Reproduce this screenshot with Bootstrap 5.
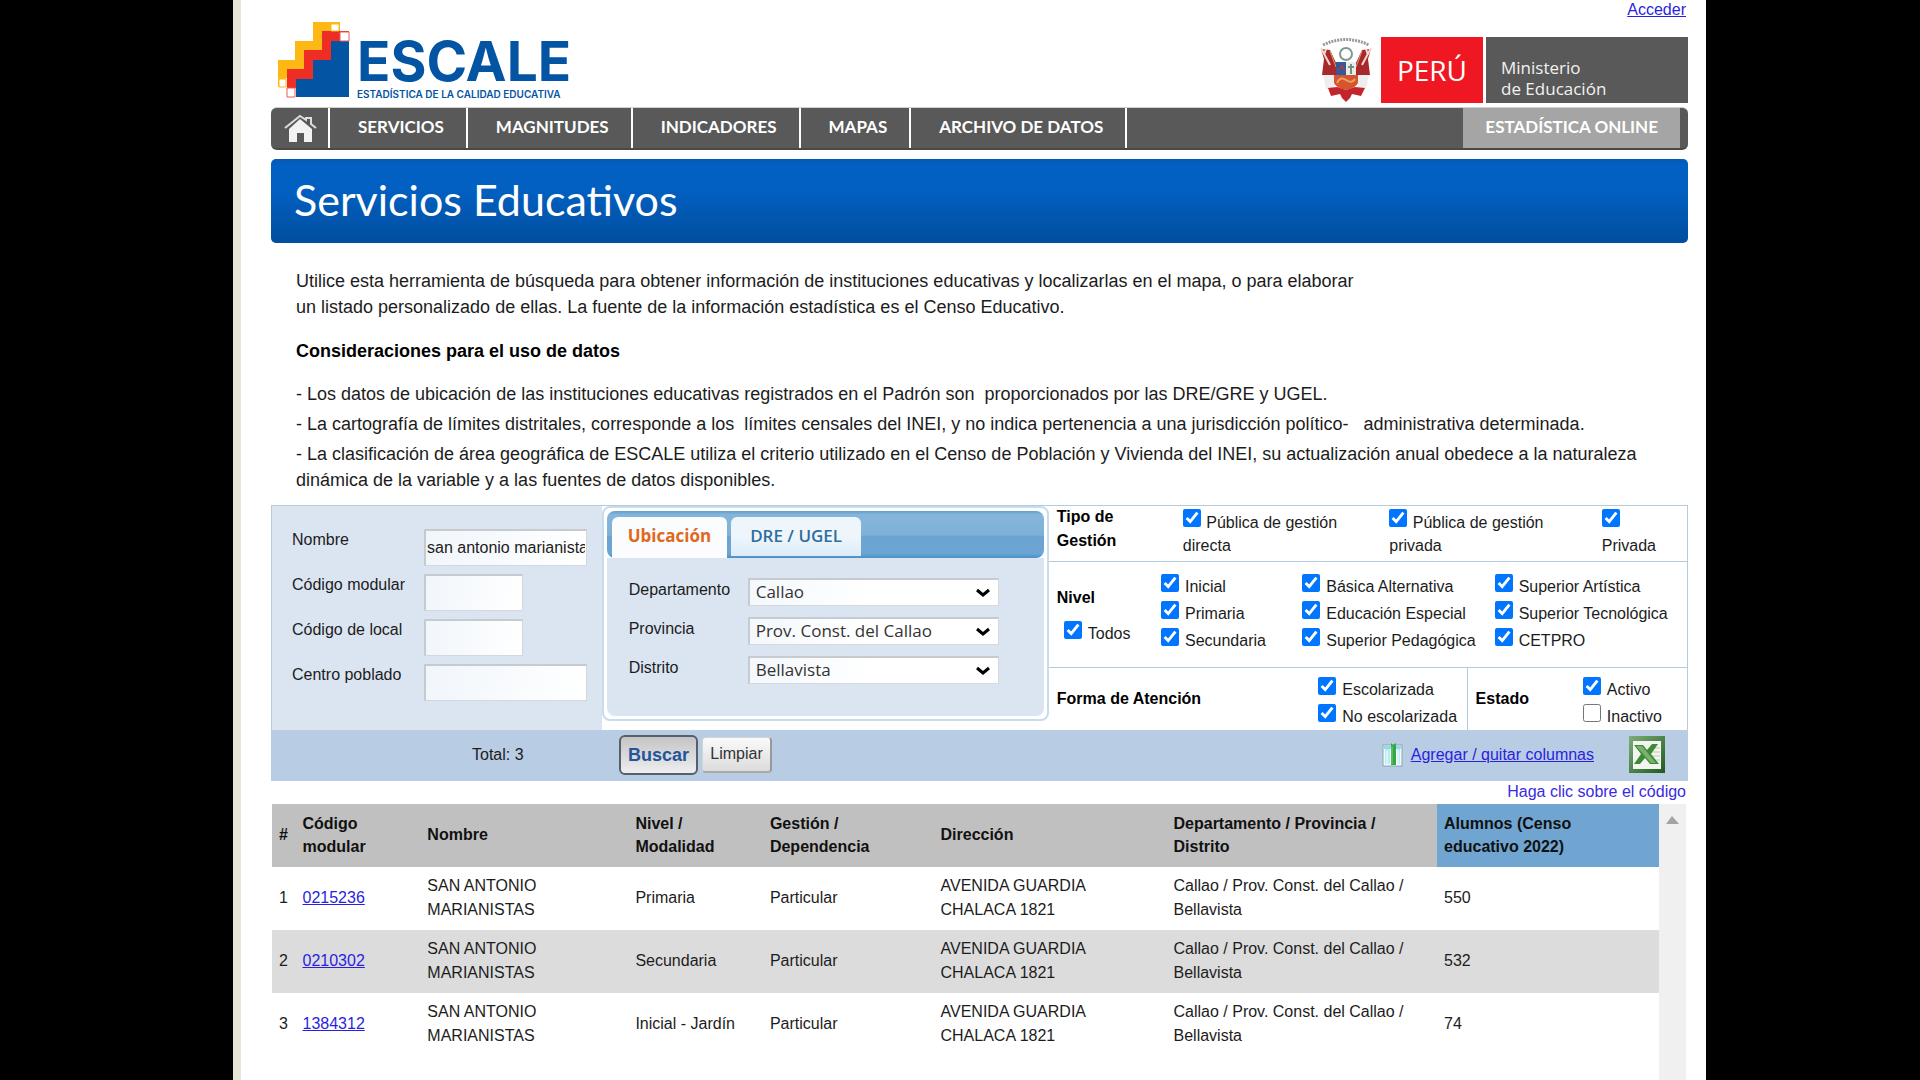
<!DOCTYPE html>
<html lang="es">
<head>
<meta charset="utf-8">
<meta name="viewport" content="width=device-width, initial-scale=1">
<title>ESCALE - Servicios Educativos</title>
<link href="https://cdn.jsdelivr.net/npm/bootstrap@5.3.0/dist/css/bootstrap.min.css" rel="stylesheet">
<style>
  body { background: #000; color: #1c1c1c; font-family: "Liberation Sans", Arial, sans-serif; font-size: 16px; line-height: 24px; }
  a { color: #2a1fe0; }
  .page-shell { margin: 0 214px 0 233px; border-left: 8px solid #e6e4d4; min-height: 100vh; background: #fff; padding: 0 18px 0 30px; overflow: hidden; }
  .login-line { height: 21px; line-height: 20px; padding-right: 2px; }
  .top-brand { height: 86px; }
  .brand-mark { margin-left: 6px; }
  .brand-text { padding: 12px 0 0 7px; }
  .brand-name { font-family: Inter, sans-serif; font-weight: 700; font-size: 55px; line-height: 56px; color: #0454a4; }
  .brand-sub { font-family: Inter, sans-serif; font-weight: 600; font-size: 10px; line-height: 10px; color: #0454a4; white-space: nowrap; }
  .gov { height: 66px; color: #fff; font-family: "Open Sans", sans-serif; }
  .gov-peru { background: #ef1822; width: 102px; font-size: 28px; }
  .gov-min { background: #595959; width: 202px; margin-left: 3px; padding: 20px 0 0 15px; font-size: 17px; line-height: 21px; color: #f2f2f2; }
  .main-nav { background: #595959; height: 43px; border-radius: 6px; border-top: 1px solid #d0d0d0; border-bottom: 2px solid #4a4a48; padding-right: 8px; font-family: Lato, sans-serif; font-weight: 700; font-size: 17px; }
  .main-nav a { color: #fff; text-decoration: none; display: flex; align-items: center; padding: 0 22px 2px 28px; border-right: 2px solid #fff; }
  .main-nav a.nav-home { padding: 0 11px 0 13px; }
  .main-nav a.nav-online { background: #a5a5a5; border: 0; padding: 0 22px 2px 22px; }
  .title-bar { margin-top: 9px; height: 84px; border-radius: 5px; background: linear-gradient(#0459b4, #0260c4 8%, #0260c2 35%, #014e9e); color: #fff; font-family: Lato, sans-serif; padding-left: 23px; }
  .title-bar h1 { font-size: 43px; font-weight: 400; line-height: 82px; margin: 0; }
  .intro { padding: 25px 20px 0 25px; font-size: 18px; line-height: 26px; }
  .intro p { margin: 0; }
  .intro h2 { font-size: 18px; font-weight: 700; line-height: 26px; margin: 18px 0 17px; color: #000; }
  .intro li { margin-bottom: 4px; }
  .intro li:last-child { margin-bottom: 0; }
  .search-form { border: 1px solid #b4cadf; border-bottom: 0; margin-top: 12px; }
  .zone-left { width: 23.3%; background: #dbe5f1; padding: 23px 0 0 20px; }
  .zone-mid { width: 31.6%; }
  .zone-right { width: 45.1%; }
  .txt-field { border: 1px solid #d2d8dd; border-top: 2px solid #c6cbd0; border-left: 2px solid #c6cbd0; background: linear-gradient(100deg, #f1f6fb, #fff); height: 37px; padding: 0 1px; color: #1c1c1c; border-radius: 0; }
  .txt-short { width: 99px; }
  .txt-wide { width: 163px; }
  .fld { display: flex; align-items: flex-start; margin-bottom: 8px; }
  .fld label { width: 132px; flex: none; line-height: 22px; }
  .tab-frame { border: 2px solid #c7dcec; border-radius: 8px; padding: 3px; background: #fff; height: 215px; }
  .tab-head { background: linear-gradient(#5f9fd0, #86b5da 8%, #7fb1d8 50%, #6aa4d2 55%, #6ca5d3 90%, #4a90c8); border-radius: 8px; height: 47px; padding: 6px 0 0 5px; gap: 4px; }
  .tab-head button { border: 0; border-radius: 6px 6px 0 0; font-family: "Open Sans", sans-serif; font-weight: 600; font-size: 17px; line-height: 20px; height: 39px; padding: 0 19px 2px; color: #2e6e9e; background: linear-gradient(#eef6fc 50%, #dcecf8); }
  .tab-head button.tab-on { background: #fafcfe; color: #e0681c; height: 41px; padding: 0 16px 4px; font-weight: 700; }
  .tab-body { background: #dbe5f1; border-radius: 0 0 8px 8px; height: 158px; padding: 20px 0 0 22px; }
  .sel-row { display: flex; align-items: flex-start; height: 39px; }
  .sel-row label { width: 119px; flex: none; line-height: 24px; }
  .sel-row select { width: 251px; height: 28px; appearance: none; border: 1px solid #d6d9dc; border-top: 2px solid #c6cbd0; border-left: 2px solid #c6cbd0; border-radius: 0; background: url("data:image/svg+xml,%3Csvg xmlns='http://www.w3.org/2000/svg' width='14' height='10'%3E%3Cpath d='M1 2L7 7L13 2' fill='none' stroke='%23000' stroke-width='3'/%3E%3C/svg%3E") no-repeat right 8px center, linear-gradient(100deg, #f4f8fc, #fff 50%); font-family: "Open Sans", sans-serif; font-size: 17px; line-height: 22px; color: #333; padding: 0 6px 2px; }
  .crit { border-bottom: 1px solid #b4cadf; padding-left: 8px; }
  .crit strong { color: #000; }
  input[type=checkbox] { width: 18px; height: 18px; margin: 0; accent-color: #0075ff; flex: none; }
  .crit-tipo { height: 56px; }
  .crit-tipo strong { width: 126px; flex: none; margin-top: -1px; }
  .opt-wrap { line-height: 23px; padding-top: 3px; white-space: nowrap; }
  .opt-wrap input { vertical-align: 1px; margin-right: 1px; }
  .tipo-a { flex: 206 1 0; }
  .tipo-b { flex: 212 1 0; }
  .tipo-c { flex: 85 1 0; }
  .crit-nivel { height: 106px; padding-top: 12px; }
  .niv-head { flex: 104 1 0; padding-top: 12px; }
  .niv-todos { margin: 11px 0 0 7px; }
  .niv-a { flex: 141 1 0; }
  .niv-b { flex: 192 1 0; }
  .niv-c { flex: 192 1 0; }
  .opt { display: flex; gap: 6px; height: 27px; align-items: flex-start; white-space: nowrap; }
  .opt label { line-height: 25px; }
  .crit-forma { height: 62px; border-bottom: 0; }
  .forma-name { flex: 261 1 0; }
  .forma-opts { flex: 148 1 0; padding-top: 9px; }
  .estado-name { flex: 107 1 0; border-left: 1px solid #b4cadf; padding-left: 8px; align-self: stretch; display: flex; align-items: center; }
  .estado-opts { flex: 104 1 0; padding-top: 9px; }
  .bottom-bar { background: #b8cce4; height: 51px; margin: 0 -1px; padding: 0 23px 2px 201px; }
  .total-box { width: 147px; }
  .btn-main { width: 79px; height: 40px; border: 2px solid #55606c; border-radius: 6px; background: linear-gradient(#c4c4c4, #eee); font-weight: 700; font-size: 18px; color: #24549a; padding: 0; margin-right: 4px; }
  .btn-alt { width: 70px; height: 36px; border: 1px solid #d4d4d4; border-right: 2px solid #999; border-bottom: 2px solid #aaa; border-radius: 4px; background: linear-gradient(#fafafa, #dcdcdc); color: #333; padding: 0; }
  .cols-link { margin: 0 35px 0 8px; }
  .hint { color: #3a2be0; text-align: right; line-height: 22px; padding: 0 2px 1px 0; }
  .results { margin-right: 2px; margin-left: 1px; }
  .res-table { width: 100%; table-layout: fixed; border-collapse: collapse; }
  .res-table th, .res-table td { padding: 0; vertical-align: middle; }
  .res-table th { background: #c0c0c0; height: 63px; line-height: 23px; color: #111; padding-bottom: 2px; }
  .res-table td { height: 63px; padding-bottom: 2px; }
  .res-table tbody tr:nth-child(2) { background: #dcdcdc; }
  .res-table th:last-child { background: #6fa5d0; }
  .res-table th:last-child, .res-table td:last-child { padding-left: 7px; }
  .res-table th:first-child, .res-table td:first-child { padding-left: 7px; }
  .c-num { width: 2.2%; } .c-cod { width: 9%; } .c-nom { width: 15%; } .c-niv { width: 9.7%; } .c-ges { width: 12.3%; } .c-dir { width: 16.8%; } .c-dep { width: 19%; }
  .scroll-track { width: 27px; flex: none; background: #f0f0f0; height: 276px; padding-top: 12px; text-align: center; line-height: 0; }
</style>
</head>
<body>
<div class="page-shell">
  <div class="login-line text-end"><a href="#">Acceder</a></div>
  <header class="top-brand d-flex justify-content-between">
    <div class="d-flex brand-mark">
      <svg width="73" height="78" viewBox="0 0 73 78" aria-hidden="true">
        <path d="M36 1H63V10H54V19H45V29H36V38H27V48H18V57H9V66H1V39H18V20H36Z" fill="#fdb813"/>
        <path d="M45 10H72V20H63V29H54V39H45V48H36V58H27V67H18V76H10V48H27V29H45Z" fill="#ee2d24"/>
        <path d="M54 20H72V76H19V58H36V39H54Z" fill="#0454a4"/>
        <path d="M54 3H62V10H54ZM2 58H9V66H2Z" fill="#fff" stroke="#fdb813"/>
        <path d="M63 11H72V20H63ZM10 67H18V76H10Z" fill="#fff" stroke="#ee5a50"/>
      </svg>
      <div class="brand-text">
        <div class="brand-name">ESCALE</div>
        <div class="brand-sub">ESTADÍSTICA DE LA CALIDAD EDUCATIVA</div>
      </div>
    </div>
    <div class="d-flex gov mt-3">
      <svg width="59" height="66" viewBox="0 0 59 66" class="me-1" aria-hidden="true">
        <path d="M5 8Q28 -3 51 8" fill="none" stroke="#999" stroke-width="3" stroke-dasharray="2 1"/>
        <path d="M3 12L12 13L19 28V38H4L6 22ZM53 12L44 13L37 28V38H52L50 22Z" fill="#a8282c"/>
        <path d="M3 11L12 28M53 11L44 28M8 12L6 18M48 12L50 18" stroke="#f3d9ce" stroke-width="2"/>
        <path d="M12 14L18 30M44 14L38 30" stroke="#d9a066" stroke-width="1"/>
        <path d="M5 38H16V52H8ZM51 38H40V52H48Z" fill="#eee"/>
        <circle cx="28" cy="17" r="6" fill="#fff" stroke="#7d9a90" stroke-width="2"/>
        <path d="M18 25H28V38H18Z" fill="#2d5c9e"/><path d="M28 25H38V38H28Z" fill="#e8ecec"/>
        <path d="M20 33L24 29L27 34" stroke="#a33c44" stroke-width="2" fill="none"/>
        <path d="M33 27V37M30 30H36" stroke="#77907c" stroke-width="2"/>
        <path d="M16 38H40V46Q38 51 28 53Q18 51 16 46Z" fill="#d4552f"/>
        <path d="M19 46Q22 39 28 43T37 42" stroke="#f0a060" stroke-width="2" fill="none"/>
        <path d="M10 51L19 50L28 53L37 50L47 51L43 59L34 57L32 61L28 65L24 61L22 57L13 59Z" fill="#c3252c"/>
      </svg>
      <div class="gov-peru d-flex align-items-center justify-content-center">PERÚ</div>
      <div class="gov-min">Ministerio<br>de Educación</div>
    </div>
  </header>
  <nav class="main-nav d-flex">
    <a class="nav-home" href="#" aria-label="Inicio"><svg width="33" height="29" viewBox="0 0 33 29"><path d="M1 14L16 2L22 6V4H27V10L32 14" fill="none" stroke="#ddd" stroke-width="2"/><path d="M16 5L28 15V28H20V19H13V28H5V15Z" fill="#f2f2f2"/></svg></a>
    <a href="#">SERVICIOS</a>
    <a href="#">MAGNITUDES</a>
    <a href="#">INDICADORES</a>
    <a href="#">MAPAS</a>
    <a href="#">ARCHIVO DE DATOS</a>
    <a class="nav-online ms-auto" href="#">ESTADÍSTICA ONLINE</a>
  </nav>
  <div class="title-bar"><h1>Servicios Educativos</h1></div>
  <section class="intro">
    <p>Utilice esta herramienta de búsqueda para obtener información de instituciones educativas y localizarlas en el mapa, o para elaborar<br>un listado personalizado de ellas. La fuente de la información estadística es el Censo Educativo.</p>
    <h2>Consideraciones para el uso de datos</h2>
    <ul class="list-unstyled m-0">
      <li>- Los datos de ubicación de las instituciones educativas registrados en el Padrón son &nbsp;proporcionados por las DRE/GRE y UGEL.</li>
      <li>- La cartografía de límites distritales, corresponde a los &nbsp;límites censales del INEI, y no indica pertenencia a una jurisdicción político- &nbsp; administrativa determinada.</li>
      <li>- La clasificación de área geográfica de ESCALE utiliza el criterio utilizado en el Censo de Población y Vivienda del INEI, su actualización anual obedece a la naturaleza dinámica de la variable y a las fuentes de datos disponibles.</li>
    </ul>
  </section>
  <form class="search-form">
    <div class="d-flex">
      <div class="zone-left">
        <div class="fld"><label for="nom">Nombre</label><input id="nom" class="txt-field txt-wide" type="text" value="san antonio marianistas"></div>
        <div class="fld"><label for="cm">Código modular</label><input id="cm" class="txt-field txt-short" type="text"></div>
        <div class="fld"><label for="cl">Código de local</label><input id="cl" class="txt-field txt-short" type="text"></div>
        <div class="fld"><label for="cp">Centro poblado</label><input id="cp" class="txt-field txt-wide" type="text"></div>
      </div>
      <div class="zone-mid">
        <div class="tab-frame">
          <div class="tab-head d-flex"><button type="button" class="tab-on">Ubicación</button><button type="button">DRE / UGEL</button></div>
          <div class="tab-body">
            <div class="sel-row"><label for="dep">Departamento</label><select id="dep"><option>Callao</option></select></div>
            <div class="sel-row"><label for="pro">Provincia</label><select id="pro"><option>Prov. Const. del Callao</option></select></div>
            <div class="sel-row"><label for="dis">Distrito</label><select id="dis"><option>Bellavista</option></select></div>
          </div>
        </div>
      </div>
      <div class="zone-right">
        <div class="crit crit-tipo d-flex">
          <strong>Tipo de<br>Gestión</strong>
          <div class="opt-wrap tipo-a"><input id="t1" type="checkbox" checked> <label for="t1" class="d-inline">Pública de gestión<br>directa</label></div>
          <div class="opt-wrap tipo-b"><input id="t2" type="checkbox" checked> <label for="t2" class="d-inline">Pública de gestión<br>privada</label></div>
          <div class="opt-wrap tipo-c"><input id="t3" type="checkbox" checked><label for="t3" class="d-block">Privada</label></div>
        </div>
        <div class="crit crit-nivel d-flex">
          <div class="niv-head"><strong class="d-block">Nivel</strong><div class="opt niv-todos"><input id="n0" type="checkbox" checked><label for="n0">Todos</label></div></div>
          <div class="niv-a">
            <div class="opt"><input id="n1" type="checkbox" checked><label for="n1">Inicial</label></div>
            <div class="opt"><input id="n2" type="checkbox" checked><label for="n2">Primaria</label></div>
            <div class="opt"><input id="n3" type="checkbox" checked><label for="n3">Secundaria</label></div>
          </div>
          <div class="niv-b">
            <div class="opt"><input id="n4" type="checkbox" checked><label for="n4">Básica Alternativa</label></div>
            <div class="opt"><input id="n5" type="checkbox" checked><label for="n5">Educación Especial</label></div>
            <div class="opt"><input id="n6" type="checkbox" checked><label for="n6">Superior Pedagógica</label></div>
          </div>
          <div class="niv-c">
            <div class="opt"><input id="n7" type="checkbox" checked><label for="n7">Superior Artística</label></div>
            <div class="opt"><input id="n8" type="checkbox" checked><label for="n8">Superior Tecnológica</label></div>
            <div class="opt"><input id="n9" type="checkbox" checked><label for="n9">CETPRO</label></div>
          </div>
        </div>
        <div class="crit crit-forma d-flex align-items-center">
          <strong class="forma-name">Forma de Atención</strong>
          <div class="forma-opts align-self-start">
            <div class="opt"><input id="f1" type="checkbox" checked><label for="f1">Escolarizada</label></div>
            <div class="opt"><input id="f2" type="checkbox" checked><label for="f2">No escolarizada</label></div>
          </div>
          <strong class="estado-name">Estado</strong>
          <div class="estado-opts align-self-start">
            <div class="opt"><input id="e1" type="checkbox" checked><label for="e1">Activo</label></div>
            <div class="opt"><input id="e2" type="checkbox"><label for="e2">Inactivo</label></div>
          </div>
        </div>
      </div>
    </div>
    <div class="bottom-bar d-flex align-items-center">
      <span class="total-box">Total: 3</span>
      <button type="submit" class="btn-main">Buscar</button>
      <button type="reset" class="btn-alt">Limpiar</button>
      <svg class="ms-auto" width="21" height="24" viewBox="0 0 21 24" aria-hidden="true">
        <rect x="1" y="2" width="19" height="21" fill="#f4fafc" stroke="#8fa3ad"/>
        <path d="M2 3H19V6H2Z" fill="#8ddce8"/><path d="M3 6H8V21H3ZM15 6H18V21H15Z" fill="#b6ecf4"/>
        <path d="M5 8V21M16 8V21" stroke="#fff"/><path d="M9 0L11 2L14 0V22H9Z" fill="#35a843"/><path d="M10 3V21" stroke="#7bd07c"/>
      </svg>
      <a class="cols-link" href="#">Agregar / quitar columnas</a>
      <a class="lh-1" href="#" aria-label="Exportar a Excel"><svg class="d-block" width="36" height="37" viewBox="0 0 36 37">
        <defs><linearGradient id="xg" x1="0" y1="0" x2="1" y2="1"><stop offset="0" stop-color="#7fae78"/><stop offset="1" stop-color="#1d5a1e"/></linearGradient></defs>
        <rect width="36" height="37" fill="url(#xg)"/><rect x="4" y="5" width="28" height="28" fill="#f3f6ee"/>
        <path d="M23 12H31M23 16H31M23 20H31M23 24H31" stroke="#b8cdb4"/>
        <path d="M5 9H14L18 14L23 8H29L22 18L30 28H21L16 22L11 28H5L12 18Z" fill="#3f8a3a"/><path d="M7 10H13L27 27H22Z" fill="#77b36c"/>
      </svg></a>
    </div>
  </form>
  <div class="hint">Haga clic sobre el código</div>
  <div class="results d-flex align-items-start">
    <table class="res-table">
      <colgroup><col class="c-num"><col class="c-cod"><col class="c-nom"><col class="c-niv"><col class="c-ges"><col class="c-dir"><col class="c-dep"><col></colgroup>
      <thead><tr><th>#</th><th>Código<br>modular</th><th>Nombre</th><th>Nivel /<br>Modalidad</th><th>Gestión /<br>Dependencia</th><th>Dirección</th><th>Departamento / Provincia /<br>Distrito</th><th>Alumnos (Censo<br>educativo 2022)</th></tr></thead>
      <tbody>
        <tr><td>1</td><td><a href="#">0215236</a></td><td>SAN ANTONIO<br>MARIANISTAS</td><td>Primaria</td><td>Particular</td><td>AVENIDA GUARDIA<br>CHALACA 1821</td><td>Callao / Prov. Const. del Callao /<br>Bellavista</td><td>550</td></tr>
        <tr><td>2</td><td><a href="#">0210302</a></td><td>SAN ANTONIO<br>MARIANISTAS</td><td>Secundaria</td><td>Particular</td><td>AVENIDA GUARDIA<br>CHALACA 1821</td><td>Callao / Prov. Const. del Callao /<br>Bellavista</td><td>532</td></tr>
        <tr><td>3</td><td><a href="#">1384312</a></td><td>SAN ANTONIO<br>MARIANISTAS</td><td>Inicial - Jardín</td><td>Particular</td><td>AVENIDA GUARDIA<br>CHALACA 1821</td><td>Callao / Prov. Const. del Callao /<br>Bellavista</td><td>74</td></tr>
      </tbody>
    </table>
    <div class="scroll-track"><svg width="13" height="8"><path d="M0 8L6 0L13 8Z" fill="#a3a3a3"/></svg></div>
  </div>
</div>
<script src="https://cdn.jsdelivr.net/npm/bootstrap@5.3.0/dist/js/bootstrap.bundle.min.js"></script>
</body>
</html>
